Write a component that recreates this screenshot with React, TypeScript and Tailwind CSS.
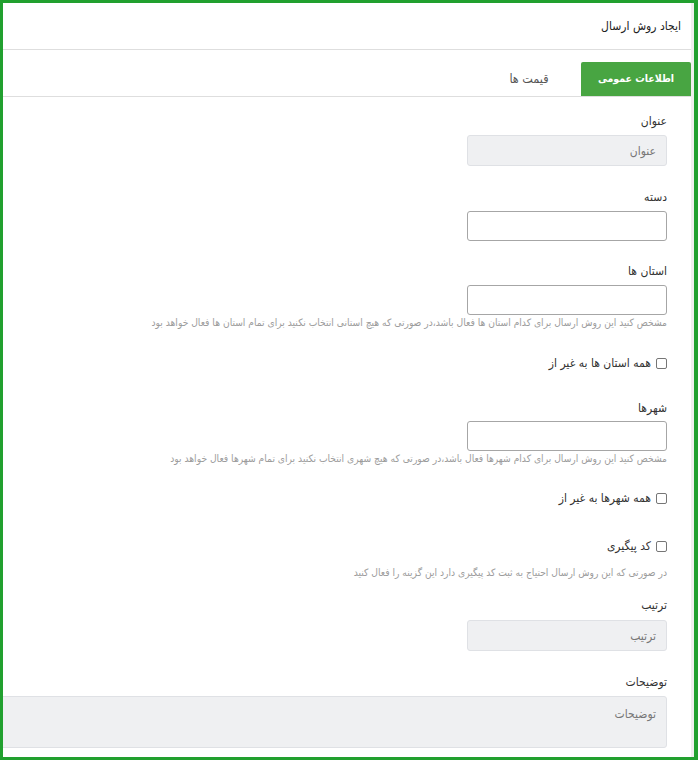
import React from "react";

const font = { fontFamily: '"DejaVu Sans Condensed", "DejaVu Sans", sans-serif' };

function Label({ children, className = "" }: { children: React.ReactNode; className?: string }) {
  return <div className={"text-[12px] leading-[16px] text-[#333] " + className}>{children}</div>;
}

function Help({ children, className = "" }: { children: React.ReactNode; className?: string }) {
  return (
    <div className={"text-[10.2px] leading-[14px] text-[#9c9c9c] whitespace-nowrap " + className}>
      {children}
    </div>
  );
}

function Check({ children, className = "" }: { children: React.ReactNode; className?: string }) {
  return (
    <div className={"flex items-center gap-[5px] text-[12px] leading-[16px] text-[#333] " + className}>
      <span className="w-[11px] h-[11px] border border-[#767676] rounded-[2px] bg-white shrink-0" />
      <span>{children}</span>
    </div>
  );
}

export default function App() {
  return (
    <div
      className="w-[698px] h-[760px] bg-[#21a02f] pt-[3px] pl-[3px] pr-[4px] pb-[3px] overflow-hidden"
      style={font}
    >
      <div className="w-full h-full flex flex-row-reverse bg-white overflow-hidden">
        <div className="w-[3px] h-full bg-[#efefef] shrink-0" />
        <div dir="rtl" className="flex-1 h-full overflow-hidden">
          <div className="h-[47px] flex items-center pr-[10px] border-b border-[#dedede] text-[12px] text-[#222]">
            ایجاد روش ارسال
          </div>
          <div className="pt-[12px] flex border-b border-[#dedede]">
            <div className="w-[110px] h-[34px] bg-[#48a542] text-white text-[10.5px] font-bold flex items-center justify-center rounded-t-[2px]">
              اطلاعات عمومی
            </div>
            <div className="w-[104px] h-[34px] text-[#555] text-[12.5px] flex items-center justify-center">
              قیمت ها
            </div>
          </div>
          <div className="pr-[24px]">
            <Label className="mt-[16px]">عنوان</Label>
            <div className="mt-[6px] w-[200px] h-[31px] bg-[#eff0f2] border border-[#dfe1e5] rounded-[3px] flex items-center pr-[10px] text-[12px] text-[#777]">
              عنوان
            </div>

            <Label className="mt-[23px]">دسته</Label>
            <div className="mt-[6px] w-[200px] h-[30px] bg-white border border-[#a6a6a6] rounded-[3px]" />

            <Label className="mt-[22px]">استان ها</Label>
            <div className="mt-[6px] w-[200px] h-[30px] bg-white border border-[#a6a6a6] rounded-[3px]" />
            <Help className="mt-[1px]">
              مشخص کنید این روش ارسال برای کدام استان ها فعال باشد،در صورتی که هیچ استانی انتخاب نکنید برای تمام استان ها فعال خواهد بود
            </Help>

            <Check className="mt-[25px]">همه استان ها به غیر از</Check>

            <Label className="mt-[29px]">شهرها</Label>
            <div className="mt-[5px] w-[200px] h-[30px] bg-white border border-[#a6a6a6] rounded-[3px]" />
            <Help className="mt-[1px]">
              مشخص کنید این روش ارسال برای کدام شهرها فعال باشد،در صورتی که هیچ شهری انتخاب نکنید برای تمام شهرها فعال خواهد بود
            </Help>

            <Check className="mt-[24px]">همه شهرها به غیر از</Check>

            <Check className="mt-[32px]">کد پیگیری</Check>
            <Help className="mt-[12px]">در صورتی که این روش ارسال احتیاج به ثبت کد پیگیری دارد این گزینه را فعال کنید</Help>

            <Label className="mt-[17px]">ترتیب</Label>
            <div className="mt-[7px] w-[200px] h-[31px] bg-[#eff0f2] border border-[#dfe1e5] rounded-[3px] flex items-center pr-[10px] text-[12px] text-[#777]">
              ترتیب
            </div>

            <Label className="mt-[23px]">توضیحات</Label>
            <div className="mt-[6px] w-[700px] h-[52px] bg-[#eff0f2] border border-[#dfe1e5] rounded-[3px] pr-[10px] pt-[8px] text-[12px] text-[#777]">
              توضیحات
            </div>
          </div>
        </div>
      </div>
    </div>
  );
}
